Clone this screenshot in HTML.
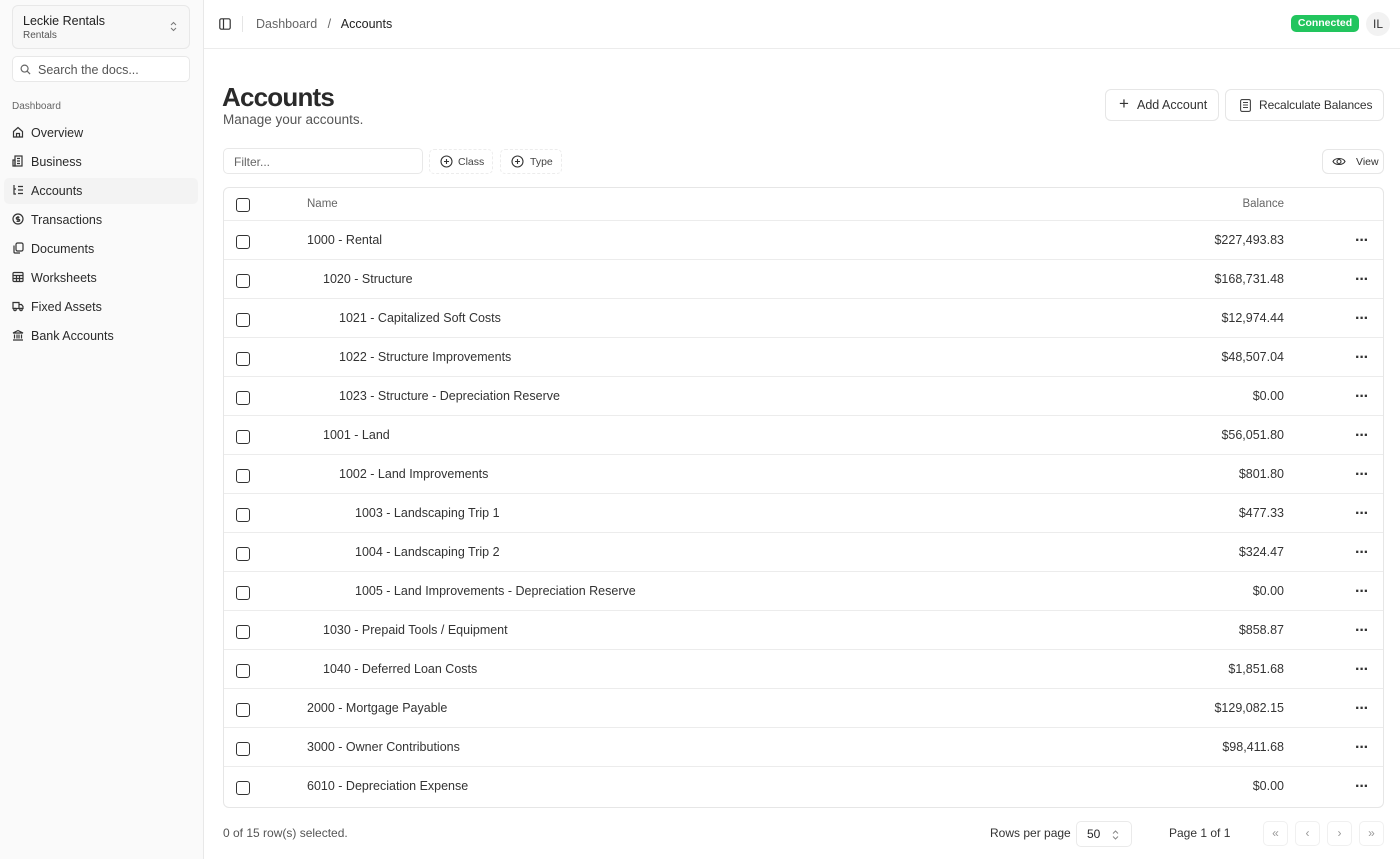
<!DOCTYPE html>
<html><head><style>
*{box-sizing:border-box;margin:0;padding:0}
body{width:1400px;height:859px;overflow:hidden;font-family:"Liberation Sans",sans-serif;color:#27272a;background:#fff;position:relative;font-size:12.5px;white-space:nowrap}
.side{position:absolute;left:0;top:0;width:204px;height:859px;background:#fafafa;border-right:1px solid #e8e8e8}
.team{position:absolute;left:12px;top:5px;width:178px;height:44px;border:1px solid #e8e8e8;border-radius:6px;background:#f8f8f8}
.team .t1{position:absolute;left:10px;top:8px;font-size:12.5px;color:#222}
.team .t2{position:absolute;left:10px;top:24px;font-size:10px;color:#555}
.search{position:absolute;left:12px;top:56px;width:178px;height:26px;border:1px solid #e8e8e8;border-radius:5px;background:#fff;font-size:12.5px;color:#555;padding:6px 0 0 25px}
.grp{position:absolute;left:12px;top:101px;font-size:10px;color:#666}
.nav{position:absolute;left:4px;width:194px;height:26px;font-size:12.5px;color:#2a2a2a;padding:6px 0 0 27px;border-radius:5px}
.nav svg{position:absolute;left:8px;top:6px}
.nav.act{background:#f3f3f3}
.hdr{position:absolute;left:204px;top:0;right:0;height:49px;border-bottom:1px solid #ececec}
.bc{position:absolute;left:52px;top:17px;font-size:12.5px;color:#666}
.bc b{font-weight:normal;color:#222}
.conn{position:absolute;left:1291px;top:15px;width:68px;height:17px;background:#22c55e;color:#fff;border-radius:5px;font-size:10.5px;font-weight:bold;text-align:center;line-height:17px}
.av{position:absolute;left:1366px;top:12px;width:24px;height:24px;border-radius:12px;background:#f2f2f2;font-size:12px;text-align:center;line-height:24px;color:#333}
h1{position:absolute;left:222px;top:82px;font-size:26px;font-weight:600;color:#2a2a2a;letter-spacing:-0.8px}
.sub{position:absolute;left:223px;top:112px;font-size:13.5px;color:#555}
.btn{position:absolute;height:32px;border:1px solid #e6e6e6;border-radius:6px;background:#fff;font-size:12.5px;color:#333;line-height:30px}
.sbtn{position:absolute;height:25px;border:1px dashed #ececec;border-radius:5px;background:#fff;font-size:10.5px;color:#444;line-height:23px}
.tbl{position:absolute;left:223px;top:187px;width:1161px;height:621px;border:1px solid #e6e6e6;border-radius:6px}
.row{position:absolute;left:0;width:1159px;height:39px;border-top:1px solid #ececec;font-size:12.5px;color:#333}
.cb{position:absolute;left:12px;width:14px;height:14px;border:1.3px solid #333;border-radius:3px}
.row .n{position:absolute;top:12px}
.row .b{position:absolute;right:99px;top:12px}
.row .d{position:absolute;left:1131px;top:12px;font-size:16px;font-weight:bold;letter-spacing:-1px;line-height:16px}
.foot{position:absolute;font-size:12px;color:#444}
.pg{position:absolute;top:821px;width:25px;height:25px;border:1px solid #f0f0f0;border-radius:5px;color:#999;text-align:center;line-height:23px;font-size:12px}
</style></head><body>
<div class="side">
 <div class="team"><div class="t1">Leckie Rentals</div><div class="t2">Rentals</div><svg style="position:absolute;right:12px;top:15px" width="7" height="11" viewBox="0 0 7 11" fill="none" stroke="#777" stroke-width="1"><path d="M1 4l2.5-2.5L6 4 M1 7l2.5 2.5L6 7"/></svg></div>
 <div class="search"><svg style="position:absolute;left:7px;top:7px" width="11" height="11" viewBox="0 0 12 12" fill="none" stroke="#666" stroke-width="1.3"><circle cx="5" cy="5" r="3.8"/><path d="M8 8l3 3"/></svg>Search the docs...</div>
 <div class="grp">Dashboard</div>
 <div class="nav" style="top:120px"><svg width="12" height="12" viewBox="0 0 12 12" fill="none" stroke="#333" stroke-width="1.2"><path d="M1.5 5.5L6 1.5l4.5 4V11h-9z M4.5 11V7.5h3V11"/></svg>Overview</div>
 <div class="nav" style="top:149px"><svg width="12" height="12" viewBox="0 0 12 12" fill="none" stroke="#333" stroke-width="1.2"><rect x="3" y="1" width="7" height="10"/><path d="M1 5h2v6H1z M5 3.5h3 M5 6h3 M5 8.5h3"/></svg>Business</div>
 <div class="nav act" style="top:178px"><svg width="12" height="12" viewBox="0 0 12 12" fill="none" stroke="#333" stroke-width="1.2"><path d="M2 1v9h2 M6 2.5h5 M6 6h5 M6 9.5h5 M2 5h2"/></svg>Accounts</div>
 <div class="nav" style="top:207px"><svg width="12" height="12" viewBox="0 0 12 12" fill="none" stroke="#333" stroke-width="1.2"><circle cx="6" cy="6" r="5"/><path d="M7.5 4.3H5.3a1 1 0 000 2h1.4a1 1 0 010 2H4.5 M6 3v6"/></svg>Transactions</div>
 <div class="nav" style="top:236px"><svg width="12" height="12" viewBox="0 0 12 12" fill="none" stroke="#333" stroke-width="1.2"><rect x="4" y="1" width="7" height="8" rx="1.5"/><path d="M2 3.5V10a1 1 0 001 1h5"/></svg>Documents</div>
 <div class="nav" style="top:265px"><svg width="12" height="12" viewBox="0 0 12 12" fill="none" stroke="#333" stroke-width="1.2"><rect x="1" y="1.5" width="10" height="9" rx="1"/><path d="M1 4.5h10 M1 7.5h10 M4.5 4.5v6 M7.5 4.5v6"/></svg>Worksheets</div>
 <div class="nav" style="top:294px"><svg width="12" height="12" viewBox="0 0 12 12" fill="none" stroke="#333" stroke-width="1.2"><path d="M1 2.5h6v6H1z M7 4.5h2.5L11 6.5v2H7"/><circle cx="3" cy="9.5" r="1.2"/><circle cx="9" cy="9.5" r="1.2"/></svg>Fixed Assets</div>
 <div class="nav" style="top:323px"><svg width="12" height="12" viewBox="0 0 12 12" fill="none" stroke="#333" stroke-width="1.2"><path d="M1 4L6 1.5 11 4z M2.5 5.5v4 M5 5.5v4 M7 5.5v4 M9.5 5.5v4 M1 11h10"/></svg>Bank Accounts</div>
</div>
<div class="hdr">
 <svg style="position:absolute;left:15px;top:18px" width="12" height="12" viewBox="0 0 12 12" fill="none" stroke="#333" stroke-width="1.2"><rect x="0.8" y="0.8" width="10.4" height="10.4" rx="1.5"/><path d="M4.5 1v10"/></svg>
 <div style="position:absolute;left:38px;top:16px;width:1px;height:16px;background:#e5e5e5"></div>
 <div class="bc">Dashboard &nbsp;&nbsp;/&nbsp;&nbsp; <b>Accounts</b></div>
</div>
<div class="conn">Connected</div>
<div class="av">IL</div>
<h1>Accounts</h1>
<div class="sub">Manage your accounts.</div>
<div class="btn" style="left:1105px;top:89px;width:114px;padding-left:31px"><span style="position:absolute;left:13px;top:-1px;font-size:17px">+</span>Add Account</div>
<div class="btn" style="left:1225px;top:89px;width:159px;padding-left:33px;font-size:12px;letter-spacing:-0.1px"><svg style="position:absolute;left:14px;top:9px" width="11" height="13" viewBox="0 0 11 13" fill="none" stroke="#444" stroke-width="1.1"><rect x="0.6" y="0.6" width="9.8" height="11.8" rx="1.5"/><path d="M3 3.5h5 M3 6h5 M3 8.5h5"/></svg>Recalculate Balances</div>
<div style="position:absolute;left:223px;top:148px;width:200px;height:26px;border:1px solid #e8e8e8;border-radius:5px;font-size:12px;color:#666;padding:6px 0 0 10px">Filter...</div>
<div class="sbtn" style="left:429px;top:149px;width:64px;padding-left:28px;line-height:24px"><svg style="position:absolute;left:10px;top:5px" width="13" height="13" viewBox="0 0 13 13" fill="none" stroke="#333" stroke-width="1.1"><circle cx="6.5" cy="6.5" r="5.5"/><path d="M6.5 4v5 M4 6.5h5"/></svg>Class</div>
<div class="sbtn" style="left:500px;top:149px;width:62px;padding-left:29px;line-height:24px"><svg style="position:absolute;left:10px;top:5px" width="13" height="13" viewBox="0 0 13 13" fill="none" stroke="#333" stroke-width="1.1"><circle cx="6.5" cy="6.5" r="5.5"/><path d="M6.5 4v5 M4 6.5h5"/></svg>Type</div>
<div class="btn" style="left:1322px;top:149px;width:62px;height:25px;line-height:24px;font-size:10.5px;padding-left:33px"><svg style="position:absolute;left:9px;top:6px" width="14" height="11" viewBox="0 0 14 11" fill="none" stroke="#333" stroke-width="1.1"><path d="M1 5.5C3 1.5 11 1.5 13 5.5 11 9.5 3 9.5 1 5.5z"/><circle cx="7" cy="5.5" r="2"/></svg>View</div>
<div class="tbl">
 <div style="position:absolute;left:0;top:0;width:1159px;height:33px;font-size:11.5px;color:#666">
  <div class="cb" style="top:10px"></div>
  <div style="position:absolute;left:83px;top:10px">Name</div>
  <div style="position:absolute;right:99px;top:10px">Balance</div>
 </div>
 <div class="row" style="top:32px"><div class="cb" style="top:14px"></div><div class="n" style="left:83px">1000 - Rental</div><div class="b">$227,493.83</div><div class="d">···</div></div>
 <div class="row" style="top:71px"><div class="cb" style="top:14px"></div><div class="n" style="left:99px">1020 - Structure</div><div class="b">$168,731.48</div><div class="d">···</div></div>
 <div class="row" style="top:110px"><div class="cb" style="top:14px"></div><div class="n" style="left:115px">1021 - Capitalized Soft Costs</div><div class="b">$12,974.44</div><div class="d">···</div></div>
 <div class="row" style="top:149px"><div class="cb" style="top:14px"></div><div class="n" style="left:115px">1022 - Structure Improvements</div><div class="b">$48,507.04</div><div class="d">···</div></div>
 <div class="row" style="top:188px"><div class="cb" style="top:14px"></div><div class="n" style="left:115px">1023 - Structure - Depreciation Reserve</div><div class="b">$0.00</div><div class="d">···</div></div>
 <div class="row" style="top:227px"><div class="cb" style="top:14px"></div><div class="n" style="left:99px">1001 - Land</div><div class="b">$56,051.80</div><div class="d">···</div></div>
 <div class="row" style="top:266px"><div class="cb" style="top:14px"></div><div class="n" style="left:115px">1002 - Land Improvements</div><div class="b">$801.80</div><div class="d">···</div></div>
 <div class="row" style="top:305px"><div class="cb" style="top:14px"></div><div class="n" style="left:131px">1003 - Landscaping Trip 1</div><div class="b">$477.33</div><div class="d">···</div></div>
 <div class="row" style="top:344px"><div class="cb" style="top:14px"></div><div class="n" style="left:131px">1004 - Landscaping Trip 2</div><div class="b">$324.47</div><div class="d">···</div></div>
 <div class="row" style="top:383px"><div class="cb" style="top:14px"></div><div class="n" style="left:131px">1005 - Land Improvements - Depreciation Reserve</div><div class="b">$0.00</div><div class="d">···</div></div>
 <div class="row" style="top:422px"><div class="cb" style="top:14px"></div><div class="n" style="left:99px">1030 - Prepaid Tools / Equipment</div><div class="b">$858.87</div><div class="d">···</div></div>
 <div class="row" style="top:461px"><div class="cb" style="top:14px"></div><div class="n" style="left:99px">1040 - Deferred Loan Costs</div><div class="b">$1,851.68</div><div class="d">···</div></div>
 <div class="row" style="top:500px"><div class="cb" style="top:14px"></div><div class="n" style="left:83px">2000 - Mortgage Payable</div><div class="b">$129,082.15</div><div class="d">···</div></div>
 <div class="row" style="top:539px"><div class="cb" style="top:14px"></div><div class="n" style="left:83px">3000 - Owner Contributions</div><div class="b">$98,411.68</div><div class="d">···</div></div>
 <div class="row" style="top:578px"><div class="cb" style="top:14px"></div><div class="n" style="left:83px">6010 - Depreciation Expense</div><div class="b">$0.00</div><div class="d">···</div></div>
</div>
<div class="foot" style="left:223px;top:826px;color:#555">0 of 15 row(s) selected.</div>
<div class="foot" style="left:990px;top:826px;color:#333">Rows per page</div>
<div style="position:absolute;left:1076px;top:821px;width:56px;height:26px;border:1px solid #eaeaea;border-radius:5px;font-size:12px;padding:5px 0 0 10px">50<svg style="position:absolute;left:35px;top:8px" width="7" height="10" viewBox="0 0 7 10" fill="none" stroke="#888" stroke-width="1"><path d="M1 3.5l2.5-2.5L6 3.5 M1 6.5L3.5 9 6 6.5"/></svg></div>
<div class="foot" style="left:1169px;top:826px;color:#333">Page 1 of 1</div>
<div class="pg" style="left:1263px">«</div>
<div class="pg" style="left:1295px">‹</div>
<div class="pg" style="left:1327px">›</div>
<div class="pg" style="left:1359px">»</div>
</body></html>
